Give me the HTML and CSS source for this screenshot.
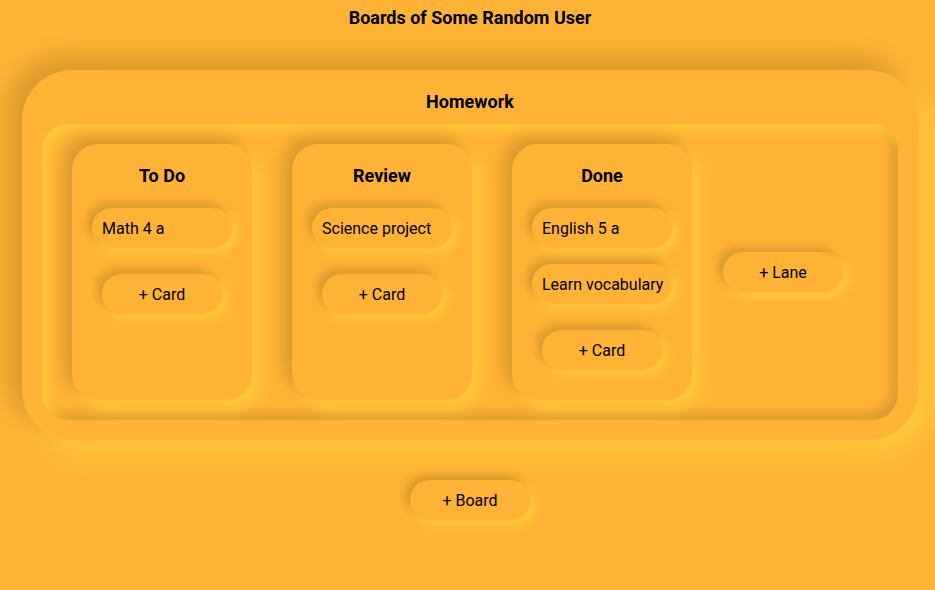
FILE: index.html
```html
<!DOCTYPE html>
<html>
<head>
<meta charset="utf-8">
<link rel="stylesheet" href="styles.css">
</head>
<body>
<div class="page">
  <h1 class="page-title">Boards of Some Random User</h1>
  <section class="board">
    <h2 class="board-title">Homework</h2>
    <div class="lanes-wrap">
      <div class="lanes">
        <div class="lane">
          <h3 class="lane-title">To Do</h3>
          <div class="cards">
            <div class="card">Math 4 a</div>
          </div>
          <button class="btn add-card">+ Card</button>
        </div>
        <div class="lane">
          <h3 class="lane-title">Review</h3>
          <div class="cards">
            <div class="card">Science project</div>
          </div>
          <button class="btn add-card">+ Card</button>
        </div>
        <div class="lane">
          <h3 class="lane-title">Done</h3>
          <div class="cards">
            <div class="card">English 5 a</div>
            <div class="card">Learn vocabulary</div>
          </div>
          <button class="btn add-card">+ Card</button>
        </div>
      </div>
      <div class="lane-add">
        <button class="btn">+ Lane</button>
      </div>
    </div>
  </section>
  <div class="board-add">
    <button class="btn">+ Board</button>
  </div>
</div>
</body>
</html>
```

FILE: styles.css
```css
html, body {
  margin: 0;
  padding: 0;
  background: #ffb336;
  font-family: Roboto, "Liberation Sans", sans-serif;
  color: #000;
}

.page {
  width: 896px;
  margin-left: 22px;
  padding-top: 7px;
  padding-bottom: 40px;
  display: flex;
  flex-direction: column;
  align-items: center;
}

.page-title {
  margin: 0;
  font-size: 18px;
  line-height: 22px;
  font-weight: 700;
}

.board {
  margin-top: 41px;
  width: 896px;
  box-sizing: border-box;
  padding: 21px 20px 20px;
  border-radius: 50px;
  background: #ffb336;
  box-shadow: -12px -12px 26px #d6972e, 12px 12px 26px #ffcf3e;
  display: flex;
  flex-direction: column;
  align-items: center;
}

.board-title {
  margin: 0 0 11px;
  font-size: 18px;
  line-height: 22px;
  font-weight: 700;
}

.lanes-wrap {
  align-self: stretch;
  display: flex;
  align-items: center;
  padding: 20px 30px;
  border-radius: 26px;
  background: #ffb336;
  box-shadow: inset 6px 6px 12px #ffcc3c, inset -6px -6px 12px #d9992f;
}

.lanes {
  display: flex;
  gap: 40px;
  align-items: stretch;
}

.lane {
  width: 180px;
  box-sizing: border-box;
  padding: 21px 20px 30px;
  border-radius: 26px;
  background: #ffb336;
  box-shadow: -8px -8px 16px #d9992f, 8px 8px 16px #ffcd3d;
  display: flex;
  flex-direction: column;
  align-items: center;
}

.lane-title {
  margin: 0 0 21px;
  font-size: 18px;
  line-height: 22px;
  font-weight: 700;
}

.cards {
  display: flex;
  flex-direction: column;
  gap: 16px;
  align-self: stretch;
}

.card {
  height: 40px;
  box-sizing: border-box;
  padding: 0 10px;
  display: flex;
  align-items: center;
  border-radius: 20px;
  background: #ffb336;
  box-shadow: -5px -5px 10px #d9992f, 5px 5px 10px #ffcd3d;
  font-size: 16px;
  white-space: nowrap;
}

.btn {
  width: 120px;
  height: 40px;
  border: none;
  border-radius: 20px;
  background: #ffb336;
  box-shadow: -5px -5px 10px #d9992f, 5px 5px 10px #ffcd3d;
  font-family: Roboto, "Liberation Sans", sans-serif;
  font-size: 16px;
  color: #000;
  padding: 0;
}

.add-card {
  margin-top: 26px;
}

.lane-add {
  margin-left: 31px;
}

.board-add {
  margin-top: 40px;
}
```
